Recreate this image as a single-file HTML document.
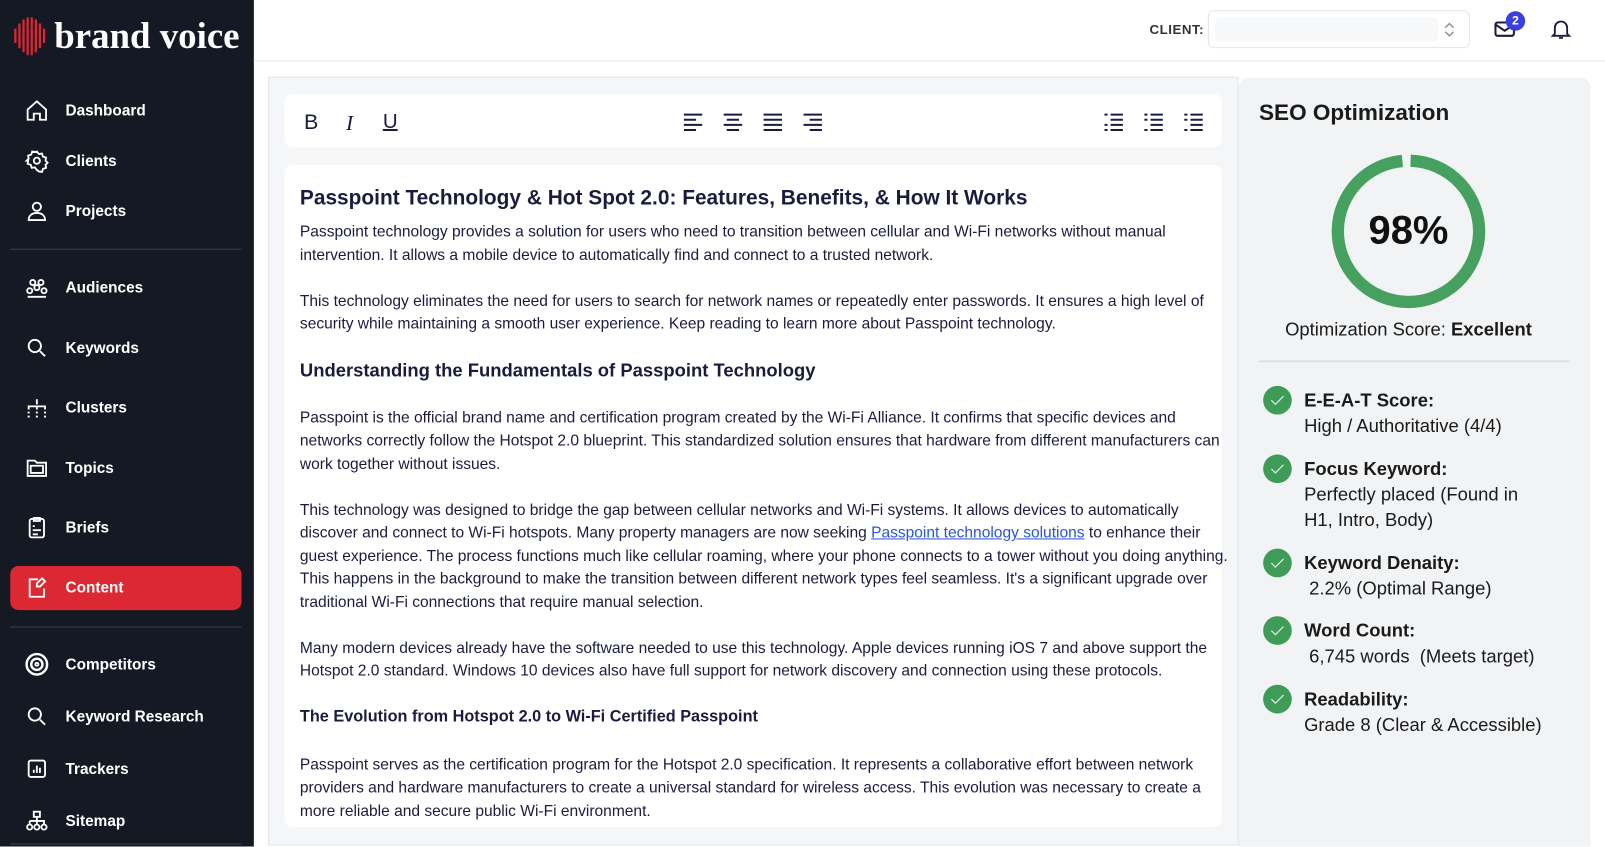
<!DOCTYPE html>
<html><head><meta charset="utf-8"><style>
*{margin:0;padding:0;box-sizing:border-box}
html,body{width:1605px;height:846px;overflow:hidden;background:#fff}
body{font-family:"Liberation Sans",sans-serif}
#w{position:absolute;left:0;top:0;width:1568px;height:827px;transform:scale(1.02360);transform-origin:0 0}
.sb{position:absolute;left:0;top:0;width:248px;height:827px;background:#141923;color:#fff}
.logo{position:absolute;left:13px;top:14px;display:flex;align-items:center}
.logo span{font-family:"Liberation Serif",serif;font-size:36px;font-weight:bold;color:#fff;margin-left:6px}
.nav{position:absolute;left:24px;display:flex;align-items:center;font-size:15px;font-weight:bold}
.nav svg{width:24px;height:24px;margin-right:16px;fill:none;stroke:#fff;stroke-width:1.8}
.hr{position:absolute;left:10px;width:226px;height:1px;background:#3a404c}
.active{position:absolute;left:10px;top:553px;width:226px;height:43px;background:#dc2832;border-radius:8px}
.top{position:absolute;left:248px;top:0;right:0;height:60px;border-bottom:1px solid #e5e7eb}
.ed{position:absolute;left:262px;top:75px;width:948px;height:751px;background:#f5f6f8;border:1px solid #e3e5e9}
.tb{position:absolute;left:15px;top:16px;width:916px;height:52px;background:#fff;border-radius:8px}
.ct{position:absolute;left:15px;top:85px;width:916px;height:647px;background:#fff;border-radius:8px;padding:20px 0 0 15px;color:#1b1c3d;font-size:15.2px;line-height:22.5px}
.ct h1{font-size:20.4px;font-weight:bold;line-height:26px;margin-bottom:9px}
.ct h2{font-size:18px;font-weight:bold;margin:8px 0 24px}
.ct h3{font-size:15.9px;font-weight:bold;margin:2px 0 24px}
.ct p{margin-bottom:22.5px;width:915px}
.seo{position:absolute;left:1210px;top:76px;width:344px;height:751px;background:#f1f3f5;border-radius:10px 10px 0 0;color:#1a1a1a}
.item{position:absolute;left:24px;display:flex}
.ck{width:28px;height:28px;border-radius:50%;background:#3f9b58;margin-right:12px;margin-top:-2px;display:flex;align-items:center;justify-content:center}
.item div.t{font-size:18px;line-height:25px}
</style></head><body><div id="w">
<div class="sb">
<div class="logo"><svg width="34" height="42" viewBox="0 0 34 42"><g stroke="#dc2832" stroke-width="2.2"><line x1="2" y1="14" x2="2" y2="28"/><line x1="6" y1="9" x2="6" y2="33"/><line x1="10" y1="5" x2="10" y2="37"/><line x1="14" y1="3" x2="14" y2="40"/><line x1="18" y1="3" x2="18" y2="40"/><line x1="22" y1="5" x2="22" y2="37"/><line x1="26" y1="9" x2="26" y2="33"/><line x1="30" y1="14" x2="30" y2="28"/></g></svg><span>brand voice</span></div>
<div class="nav" style="top:96px"><svg viewBox="0 0 24 24"><path d="M3 11l9-8 9 8v10h-6v-6h-6v6H3z"/></svg>Dashboard</div>
<div class="nav" style="top:145px"><svg viewBox="0 0 24 24"><circle cx="12" cy="12" r="3"/><path d="M12 3l2 2.5 3-.5 1 3 3 1-.5 3 2 2-2 2 .5 3-3 1-1 3-3-.5L12 21l-2-2.5-3 .5-1-3-3-1 .5-3L2 12l2-2-.5-3 3-1 1-3 3 .5z"/></svg>Clients</div>
<div class="nav" style="top:194px"><svg viewBox="0 0 24 24"><circle cx="12" cy="8" r="4"/><path d="M4 21c0-5 4-7 8-7s8 2 8 7z"/></svg>Projects</div>
<div class="hr" style="top:243px"></div>
<div class="nav" style="top:269px"><svg viewBox="0 0 24 24"><circle cx="8" cy="7" r="2.5"/><circle cx="16" cy="7" r="2.5"/><circle cx="12" cy="12" r="2.5"/><circle cx="5" cy="15" r="2.5"/><circle cx="19" cy="15" r="2.5"/><path d="M3 21h18"/></svg>Audiences</div>
<div class="nav" style="top:328px"><svg viewBox="0 0 24 24"><circle cx="10" cy="10" r="6"/><path d="M15 15l5 5"/></svg>Keywords</div>
<div class="nav" style="top:386px"><svg viewBox="0 0 24 24"><path d="M12 4v5M4 14v-3h16v3M12 11v3M3 17h2M11 17h2M19 17h2M3 21h2M11 21h2M19 21h2"/></svg>Clusters</div>
<div class="nav" style="top:445px"><svg viewBox="0 0 24 24"><path d="M3 5h7l2 2h9v13H3z"/><path d="M6 10h12v7H6z"/></svg>Topics</div>
<div class="nav" style="top:503px"><svg viewBox="0 0 24 24"><rect x="5" y="4" width="14" height="18" rx="2"/><path d="M9 3h6v3H9zM8 11h2M8 15h8M8 19h5"/></svg>Briefs</div>
<div class="active"></div>
<div class="nav" style="top:562px"><svg viewBox="0 0 24 24"><path d="M13 4H5v17h14v-8"/><path d="M17 3l3 3-5 5h-3V8z"/></svg>Content</div>
<div class="hr" style="top:612px"></div>
<div class="nav" style="top:637px"><svg viewBox="0 0 24 24"><circle cx="12" cy="12" r="10" stroke-width="2.4"/><circle cx="12" cy="12" r="5.5" stroke-width="2.4"/><circle cx="12" cy="12" r="1.5"/></svg>Competitors</div>
<div class="nav" style="top:688px"><svg viewBox="0 0 24 24"><circle cx="10" cy="10" r="6"/><path d="M15 15l5 5"/></svg>Keyword Research</div>
<div class="nav" style="top:739px"><svg viewBox="0 0 24 24"><rect x="4" y="4" width="16" height="16" rx="2"/><path d="M9 16v-3M12 16V9M15 16v-5"/></svg>Trackers</div>
<div class="nav" style="top:790px"><svg viewBox="0 0 24 24"><rect x="9" y="3" width="6" height="5"/><path d="M12 8v4M5 12h14v3M5 12v3M12 12v3"/><circle cx="5" cy="18" r="2.5"/><circle cx="12" cy="18" r="2.5"/><circle cx="19" cy="18" r="2.5"/></svg>Sitemap</div>
<div class="hr" style="top:824px"></div>
</div>
<div class="top">
<div style="position:absolute;left:875px;top:21px;font-size:13px;font-weight:bold;color:#333;letter-spacing:.5px">CLIENT:</div>
<div style="position:absolute;left:932px;top:10px;width:256px;height:37px;border:1px solid #e3e5e9;border-radius:6px;background:#fff"><div style="position:absolute;left:6px;top:6px;width:218px;height:24px;background:#f7f8f9;border-radius:5px"></div><svg style="position:absolute;left:228px;top:9px" width="14" height="18" viewBox="0 0 14 18"><path d="M3 7l4-4 4 4M3 11l4 4 4-4" fill="none" stroke="#888" stroke-width="1.3"/></svg></div>
<svg style="position:absolute;left:1211px;top:17px" width="24" height="22" viewBox="0 0 24 22"><rect x="2" y="5" width="18" height="13" rx="2" fill="none" stroke="#1b1c3d" stroke-width="2"/><path d="M2 7l9 6 9-6" fill="none" stroke="#1b1c3d" stroke-width="2"/></svg>
<div style="position:absolute;left:1223px;top:11px;width:19px;height:19px;border-radius:50%;background:#3b3fdb;color:#fff;font-size:12px;font-weight:bold;text-align:center;line-height:19px">2</div>
<svg style="position:absolute;left:1265px;top:16px" width="24" height="24" viewBox="0 0 24 24"><path d="M6 17V11a6 6 0 0112 0v6l2 2H4z M10 21h4" fill="none" stroke="#1b1c3d" stroke-width="1.8"/></svg>
</div>
<div class="ed">
<div class="tb">
<div style="position:absolute;left:19px;top:16px;font-size:21px;color:#1b1c3d">B</div>
<div style="position:absolute;left:60px;top:16px;font-size:21px;color:#1b1c3d;font-family:'Liberation Serif',serif;font-style:italic">I</div>
<div style="position:absolute;left:96px;top:16px;font-size:20px;color:#1b1c3d;text-decoration:underline">U</div>
<svg style="position:absolute;left:390px;top:18px" width="140" height="20" viewBox="0 0 140 20" stroke="#1b1c3d" stroke-width="2"><path d="M0 2h18M0 7h12M0 12h18M0 17h12"/><path d="M39 2h18M42 7h12M39 12h18M42 17h12"/><path d="M78 2h18M78 7h18M78 12h18M78 17h18"/><path d="M135 2h-18M135 7h-12M135 12h-18M135 17h-12"/></svg>
<svg style="position:absolute;left:801px;top:18px" width="100" height="20" viewBox="0 0 100 20" stroke="#1b1c3d" stroke-width="2"><path d="M6 2h12M6 7h12M6 12h12M6 17h12M0 2h3M0 12h3M0 17h3"/><path d="M45 2h12M45 7h12M45 12h12M45 17h12M39 2h3M39 7h3M39 17h3"/><path d="M84 2h12M84 7h12M84 12h12M84 17h12M78 2h3M78 7h3M78 17h3"/></svg>
</div>
<div class="ct">
<h1>Passpoint Technology &amp; Hot Spot 2.0: Features, Benefits, &amp; How It Works</h1>
<p>Passpoint technology provides a solution for users who need to transition between cellular and Wi-Fi networks without manual intervention. It allows a mobile device to automatically find and connect to a trusted network.</p>
<p>This technology eliminates the need for users to search for network names or repeatedly enter passwords. It ensures a high level of security while maintaining a smooth user experience. Keep reading to learn more about Passpoint technology.</p>
<h2>Understanding the Fundamentals of Passpoint Technology</h2>
<p>Passpoint is the official brand name and certification program created by the Wi-Fi Alliance. It confirms that specific devices and networks correctly follow the Hotspot 2.0 blueprint. This standardized solution ensures that hardware from different manufacturers can work together without issues.</p>
<p>This technology was designed to bridge the gap between cellular networks and Wi-Fi systems. It allows devices to automatically discover and connect to Wi-Fi hotspots. Many property managers are now seeking <span style="color:#2a56d6;text-decoration:underline">Passpoint technology solutions</span> to enhance their guest experience. The process functions much like cellular roaming, where your phone connects to a tower without you doing anything. This happens in the background to make the transition between different network types feel seamless. It's a significant upgrade over traditional Wi-Fi connections that require manual selection.</p>
<p>Many modern devices already have the software needed to use this technology. Apple devices running iOS 7 and above support the Hotspot 2.0 standard. Windows 10 devices also have full support for network discovery and connection using these protocols.</p>
<h3>The Evolution from Hotspot 2.0 to Wi-Fi Certified Passpoint</h3>
<p>Passpoint serves as the certification program for the Hotspot 2.0 specification. It represents a collaborative effort between network providers and hardware manufacturers to create a universal standard for wireless access. This evolution was necessary to create a more reliable and secure public Wi-Fi environment.</p>
</div>
</div>
<div class="seo">
<div style="position:absolute;left:20px;top:21px;font-size:22px;font-weight:bold">SEO Optimization</div>
<svg style="position:absolute;left:90px;top:74px" width="152" height="152" viewBox="0 0 152 152"><circle cx="76" cy="76" r="69" fill="none" stroke="#46a060" stroke-width="12" stroke-dasharray="425 8" transform="rotate(-88 76 76)"/></svg>
<div style="position:absolute;left:0;width:332px;top:128px;text-align:center;font-size:39px;font-weight:bold;color:#111">98%</div>
<div style="position:absolute;left:0;width:332px;top:236px;text-align:center;font-size:18px">Optimization Score: <b>Excellent</b></div>
<div style="position:absolute;left:20px;top:276px;width:303px;height:2px;background:#dde0e3"></div>
<div class="item" style="top:303px"><div class="ck"><svg width="14" height="10"><path d="M1 5l4 4 8-8" fill="none" stroke="#cfe8d5" stroke-width="1.3"/></svg></div><div class="t"><b>E-E-A-T Score:</b><br>High / Authoritative (4/4)</div></div>
<div class="item" style="top:370px"><div class="ck"><svg width="14" height="10"><path d="M1 5l4 4 8-8" fill="none" stroke="#cfe8d5" stroke-width="1.3"/></svg></div><div class="t"><b>Focus Keyword:</b><br>Perfectly placed (Found in<br>H1, Intro, Body)</div></div>
<div class="item" style="top:462px"><div class="ck"><svg width="14" height="10"><path d="M1 5l4 4 8-8" fill="none" stroke="#cfe8d5" stroke-width="1.3"/></svg></div><div class="t"><b>Keyword Denaity:</b><br>&nbsp;2.2% (Optimal Range)</div></div>
<div class="item" style="top:528px"><div class="ck"><svg width="14" height="10"><path d="M1 5l4 4 8-8" fill="none" stroke="#cfe8d5" stroke-width="1.3"/></svg></div><div class="t"><b>Word Count:</b><br>&nbsp;6,745 words &nbsp;(Meets target)</div></div>
<div class="item" style="top:595px"><div class="ck"><svg width="14" height="10"><path d="M1 5l4 4 8-8" fill="none" stroke="#cfe8d5" stroke-width="1.3"/></svg></div><div class="t"><b>Readability:</b><br>Grade 8 (Clear &amp; Accessible)</div></div>
</div>
</div></body></html>
